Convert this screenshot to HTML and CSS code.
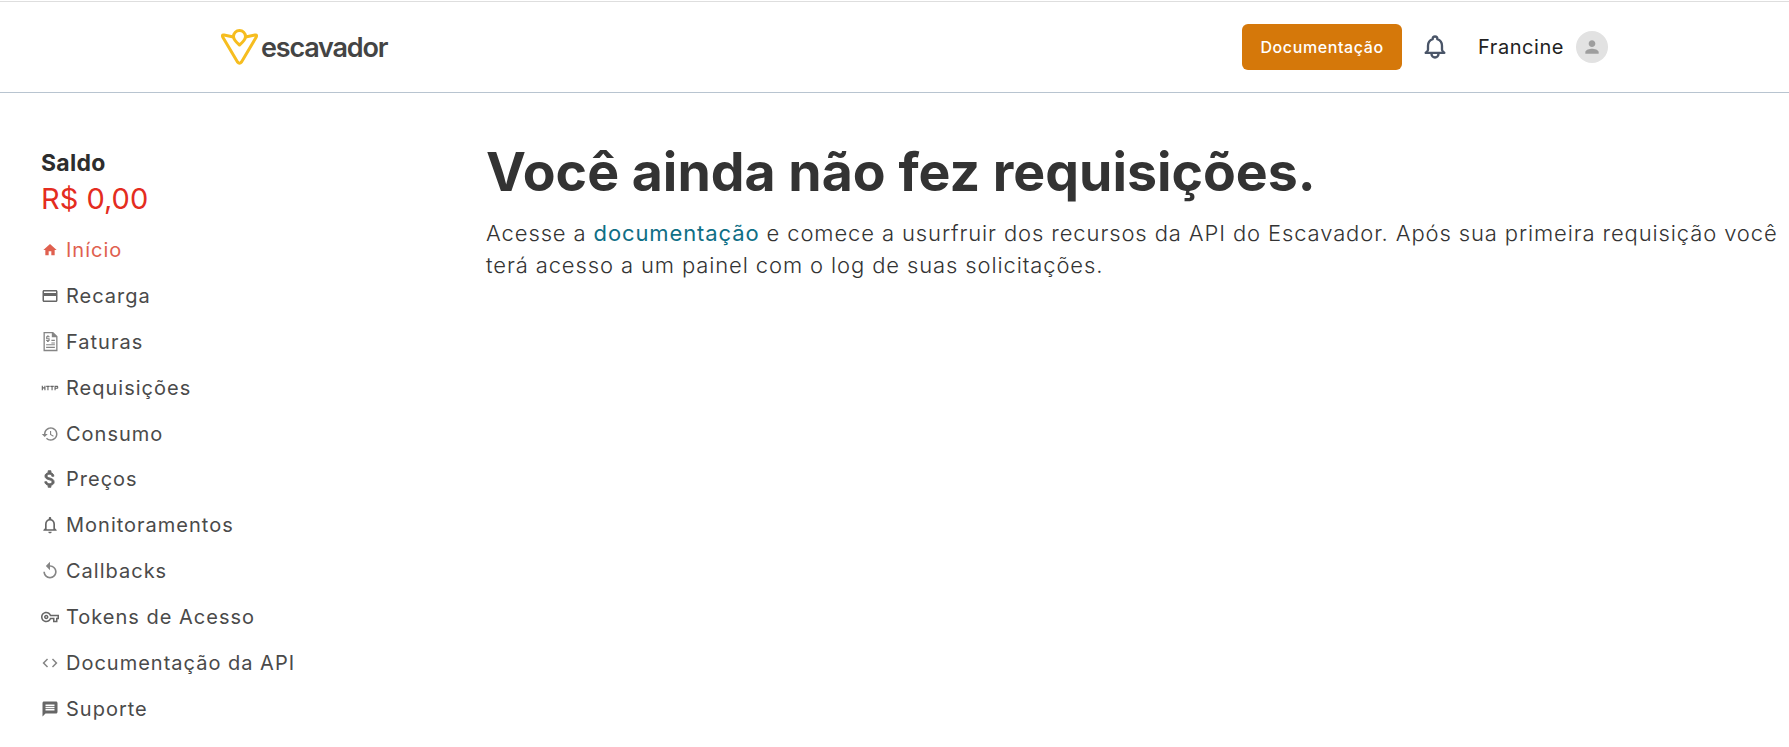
FILE: index.html
```html
<!DOCTYPE html>
<html lang="pt-BR">
<head>
  <meta charset="UTF-8" />
  <title>Escavador | API</title>
  <link rel="stylesheet" href="styles.css">
</head>
<body>
  <!-- HEADER -->
  <header class="topbar">
    <a class="logo" href="#">
      <svg class="logo-mark" viewBox="0 0 39 36" fill="none" stroke="#f6bd1f" stroke-width="3" stroke-linejoin="round" stroke-linecap="round">
        <path d="M13.500 8 L4 6 Q1.500 5.500 3 8.500 L17.500 33 Q19.500 35.500 21.500 33 L36 8.500 Q37.500 5.500 35 6 L25.500 8"/>
        <path d="M19.500 16 C16 13 13.500 10.500 13.500 7.500 A6 6 0 0 1 25.500 7.500 C25.500 10.500 23 13 19.500 16 Z"/>
      </svg>
      <span class="logo-text">escavador</span>
    </a>
    <div class="topbar-right">
      <a class="btn-docs" href="#">Documentação</a>
      <svg class="bell" viewBox="0 0 24 24" fill="none" stroke="#4a5568" stroke-width="2" stroke-linecap="round" stroke-linejoin="round">
        <path d="M15 17h5l-1.400-1.400A2 2 0 0 1 18 14.200V11a6 6 0 0 0-4-5.700V5a2 2 0 1 0-4 0v.3A6 6 0 0 0 6 11v3.200c0 .5-.2 1-.6 1.400L4 17h5m6 0v1a3 3 0 1 1-6 0v-1m6 0H9"/>
      </svg>
      <span class="user-name">Francine</span>
      <span class="avatar">
        <svg viewBox="0 0 24 24" fill="#9e9e9e"><path d="M12 12c2.210 0 4-1.790 4-4s-1.790-4-4-4-4 1.790-4 4 1.790 4 4 4zm0 2c-2.670 0-8 1.340-8 4v2h16v-2c0-2.660-5.330-4-8-4z"/></svg>
      </span>
    </div>
  </header>

  <div class="page">
    <!-- SIDEBAR -->
    <aside class="sidebar">
      <div class="saldo-label">Saldo</div>
      <div class="saldo-value">R$ 0,00</div>
      <nav class="menu">
        <a class="menu-item active" href="#"><span class="menu-icon"><svg class="ico-16" viewBox="0 0 24 24"><path d="M10 20v-6h4v6h5v-8h3L12 3 2 12h3v8z"/></svg></span>Início</a>
        <a class="menu-item" href="#"><span class="menu-icon"><svg class="ico-18" viewBox="0 0 24 24"><path d="M20 4H4c-1.110 0-1.990.89-1.990 2L2 18c0 1.110.89 2 2 2h16c1.110 0 2-.89 2-2V6c0-1.110-.89-2-2-2zm0 14H4v-6h16v6zm0-10H4V6h16v2z"/></svg></span>Recarga</a>
        <a class="menu-item" href="#"><span class="menu-icon"><svg class="ico-21 ico-light" viewBox="0 0 24 24"><path fill-rule="evenodd" d="M4 1h11l5 5v17H4zm1.500 1.500v19h13V7h-5V2.500zM8 5h2v1h1v1.200H8.300v1H11V11.500H10v1H8v-1H7v-1.200h2.700v-1H7V6h1zM13 10h4v1.300h-4zM13 13h4v1.300h-4zM7 15h10v1.300H7zM7 18h10v1.300H7z"/></svg></span>Faturas</a>
        <a class="menu-item" href="#"><span class="menu-icon"><svg class="ico-18" viewBox="0 0 24 24"><path d="M4.500 11h-2V9H1v6h1.500v-2.500h2V15H6V9H4.500v2zm2.500-.5h1.500V15H10v-4.500h1.500V9H7v1.500zm5.500 0H14V15h1.500v-4.500H17V9h-4.500v1.500zm9-1.500H18v6h1.500v-2h2c.8 0 1.500-.7 1.500-1.500v-1c0-.8-.7-1.500-1.500-1.500zm0 2.500h-2v-1h2v1z"/></svg></span>Requisições</a>
        <a class="menu-item" href="#"><span class="menu-icon"><svg class="ico-18 ico-light" viewBox="0 0 24 24"><path d="M13 3c-4.970 0-9 4.030-9 9H1l3.890 3.890.07.140L9 12H6c0-3.870 3.130-7 7-7s7 3.130 7 7-3.130 7-7 7c-1.930 0-3.680-.79-4.940-2.060l-1.420 1.420C8.270 19.990 10.510 21 13 21c4.970 0 9-4.030 9-9s-4.030-9-9-9zm-1 5v5l4.280 2.540.72-1.210-3.500-2.080V8H12z"/></svg></span>Consumo</a>
        <a class="menu-item" href="#"><span class="menu-icon"><svg class="ico-22 ico-bold" viewBox="0 0 24 24"><path d="M11.800 10.900c-2.270-.59-3-1.200-3-2.150 0-1.090 1.010-1.850 2.700-1.850 1.780 0 2.440.85 2.500 2.100h2.210c-.07-1.720-1.120-3.300-3.210-3.810V3h-3v2.160c-1.940.42-3.500 1.680-3.500 3.610 0 2.310 1.910 3.460 4.700 4.130 2.500.6 3 1.480 3 2.410 0 .69-.49 1.790-2.700 1.790-2.060 0-2.870-.92-2.980-2.100h-2.200c.12 2.190 1.760 3.420 3.680 3.830V21h3v-2.150c1.950-.37 3.500-1.500 3.500-3.550 0-2.840-2.430-3.810-4.700-4.400z"/></svg></span>Preços</a>
        <a class="menu-item" href="#"><span class="menu-icon"><svg class="ico-20" viewBox="0 0 24 24"><path d="M12 22c1.100 0 2-.9 2-2h-4c0 1.100.9 2 2 2zm6-6v-5c0-3.070-1.630-5.640-4.500-6.320V4c0-.83-.67-1.500-1.500-1.500s-1.500.67-1.500 1.500v.68C7.640 5.360 6 7.920 6 11v5l-2 2v1h16v-1l-2-2zm-2 1H8v-6c0-2.480 1.510-4.500 4-4.500s4 2.020 4 4.500v6z"/></svg></span>Monitoramentos</a>
        <a class="menu-item" href="#"><span class="menu-icon"><svg class="ico-20 ico-light" viewBox="0 0 24 24"><path d="M12 5V1L7 6l5 5V7c3.310 0 6 2.690 6 6s-2.690 6-6 6-6-2.690-6-6H4c0 4.420 3.580 8 8 8s8-3.580 8-8-3.580-8-8-8z"/></svg></span>Callbacks</a>
        <a class="menu-item" href="#"><span class="menu-icon"><svg class="ico-18" viewBox="0 0 24 24"><path d="M22 19h-6v-4h-2.680c-1.140 2.420-3.600 4-6.320 4-3.860 0-7-3.140-7-7s3.140-7 7-7c2.720 0 5.170 1.580 6.320 4H24v6h-2v4zm-4-2h2v-4h2v-2H11.940l-.23-.67C11.010 8.340 9.110 7 7 7c-2.760 0-5 2.240-5 5s2.240 5 5 5c2.110 0 4.010-1.340 4.710-3.330l.23-.67H18v4zM7 15c-1.650 0-3-1.350-3-3s1.350-3 3-3 3 1.350 3 3-1.350 3-3 3zm0-4c-.55 0-1 .45-1 1s.45 1 1 1 1-.45 1-1-.45-1-1-1z"/></svg></span>Tokens de Acesso</a>
        <a class="menu-item" href="#"><span class="menu-icon"><svg class="ico-18 ico-light" viewBox="0 0 24 24"><path d="M9.400 16.600L4.800 12l4.600-4.600L8 6l-6 6 6 6 1.400-1.400zm5.200 0l4.600-4.600-4.600-4.600L16 6l6 6-6 6-1.400-1.400z"/></svg></span>Documentação da API</a>
        <a class="menu-item" href="#"><span class="menu-icon"><svg class="ico-18" viewBox="0 0 24 24"><path d="M20 2H4c-1.100 0-1.990.9-1.990 2L2 22l4-4h14c1.100 0 2-.9 2-2V4c0-1.100-.9-2-2-2zm-2 12H6v-2h12v2zm0-3H6V9h12v2zm0-3H6V6h12v2z"/></svg></span>Suporte</a>
      </nav>
    </aside>

    <!-- MAIN -->
    <main class="content">
      <h1>Você ainda não fez requisições.</h1>
      <p>Acesse a <a href="#">documentação</a> e comece a usurfruir dos recursos da API do Escavador. Após sua primeira requisição você terá acesso a um painel com o log de suas solicitações.</p>
    </main>
  </div>
</body>
</html>
```

FILE: styles.css
```css
*{margin:0;padding:0;box-sizing:border-box;}
html,body{
  height:100%;
  font-family:'Inter','Open Sans',sans-serif;
  background:#fff;
  color:#333;
  overflow:hidden;
}
a{text-decoration:none;color:inherit;}

/* ---------- HEADER ---------- */
.topbar{
  height:92px;
  margin-top:1px;
  border-top:1px solid #dedede;
  border-bottom:1px solid #b8c4d0;
  display:flex;
  align-items:center;
  justify-content:space-between;
  padding:0 181px 0 220px;
}
.logo{display:flex;align-items:center;gap:2px;}
.logo-mark{width:39px;height:36px;}
.logo-text{font-family:'Inter',sans-serif;font-weight:600;font-size:27px;letter-spacing:-1.2px;color:#444;}

.topbar-right{display:flex;align-items:center;}
.btn-docs{
  width:160px;height:46px;
  display:flex;align-items:center;justify-content:center;
  background:#d5780a;
  color:#fff;
  font-size:16px;
  letter-spacing:.6px;
  font-weight:500;
  border-radius:6px;
}
.bell{width:28px;height:28px;margin-left:19px;}
.user-name{margin-left:29px;font-size:20px;letter-spacing:.55px;color:#222;}
.avatar{
  width:32px;height:32px;margin-left:12px;
  border-radius:50%;
  background:#e2e2e2;
  display:flex;align-items:center;justify-content:center;
}
.avatar svg{width:20px;height:20px;}

/* ---------- SIDEBAR ---------- */
.page{display:flex;}
.sidebar{width:486px;padding:56px 0 0 41px;flex-shrink:0;}
.saldo-label{font-size:23px;letter-spacing:.3px;font-weight:700;color:#2d2d2d;line-height:28px;}
.saldo-value{font-size:29px;font-weight:400;color:#e42c20;line-height:36px;margin-top:4px;}
.menu{display:flex;flex-direction:column;margin-top:10px;}
.menu-item{
  height:45.9px;
  display:flex;align-items:center;gap:7px;
  font-size:20px;
  letter-spacing:1px;
  color:#4a4a4a;
}
.menu-icon{width:18px;display:flex;justify-content:center;flex-shrink:0;}
.menu-icon svg{fill:#666;flex-shrink:0;}
.menu-icon .ico-light{fill:#858585;}
.menu-icon .ico-bold{stroke:#666;stroke-width:1;}
.ico-16{width:16px;height:16px;}
.ico-18{width:18px;height:18px;}
.ico-20{width:20px;height:20px;}
.ico-21{width:21px;height:21px;}
.ico-22{width:22px;height:22px;}
.menu-item.active{color:#e0604f;}
.menu-item.active svg{fill:#e0604f;}

/* ---------- MAIN ---------- */
.content{flex:1;padding-top:45px;}
h1{font-size:53.6px;font-weight:700;color:#333;line-height:68px;}
p{font-size:22px;letter-spacing:.88px;font-weight:300;line-height:32px;margin-top:11px;color:#333;}
p a{color:#0f6f85;font-weight:400;}
```
